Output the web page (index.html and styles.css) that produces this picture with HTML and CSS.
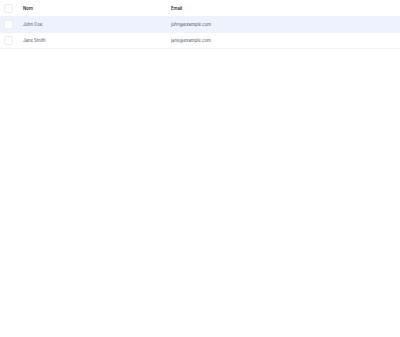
FILE: index.html
```html
<!DOCTYPE html>
<html lang="fr">
<head>
<meta charset="utf-8">
<link rel="stylesheet" href="styles.css">
</head>
<body>
<table class="grid">
  <thead>
    <tr>
      <th class="sel"><span class="box"></span></th>
      <th class="name">Nom</th>
      <th>Email</th>
    </tr>
  </thead>
  <tbody>
    <tr class="active">
      <td class="sel"><span class="box"></span></td>
      <td class="name">John Doe</td>
      <td>john@example.com</td>
    </tr>
    <tr>
      <td class="sel"><span class="box"></span></td>
      <td class="name">Jane Smith</td>
      <td>jane@example.com</td>
    </tr>
  </tbody>
</table>
</body>
</html>
```
FILE: styles.css
```css
html, body {
  margin: 0;
  padding: 0;
  background: #fff;
}
body {
  font-family: Inter, "Noto Sans", sans-serif;
  font-size: 4.3px;
  color: #4b5563;
}
.grid {
  width: 400px;
  border-collapse: collapse;
}
.grid th, .grid td {
  height: 15px;
  padding: 0;
  text-align: left;
  vertical-align: middle;
  border-bottom: 1px solid #f1f2f4;
}
.grid th {
  height: 16px;
  font-weight: 600;
  color: #1f2937;
}
.grid .sel {
  width: 23px;
  padding-left: 4px;
  box-sizing: border-box;
}
.grid .name {
  width: 148px;
}
.grid tr.active td {
  background: #eef2ff;
}
.box {
  display: block;
  width: 9px;
  height: 9px;
  border: 1px solid #eceef1;
  border-radius: 2px;
  box-sizing: border-box;
  background: #fff;
}
```
